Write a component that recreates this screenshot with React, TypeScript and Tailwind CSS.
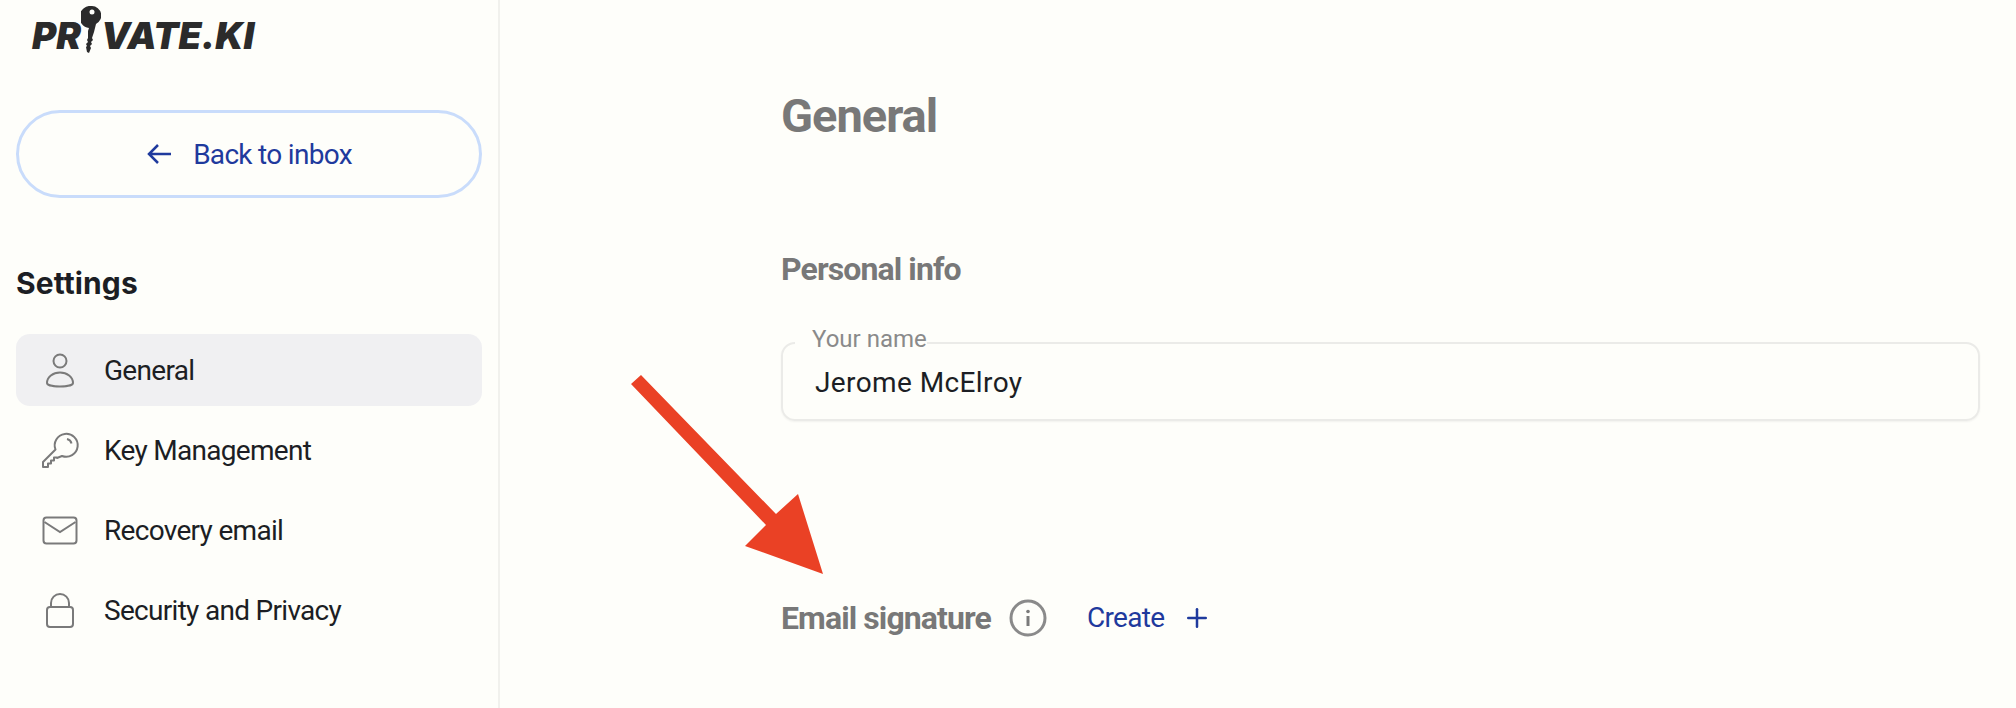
import { Plus } from "lucide-react";
import type { ReactNode } from "react";

function PersonIcon() {
  return (
    <svg width="40" height="40" viewBox="0 0 40 40" fill="none" stroke="#7a7a7a" strokeWidth="2">
      <circle cx="20" cy="11" r="6.5" />
      <path d="M7 33c0-6 6-10.500 13-10.500S33 27 33 33c0 2-6 3.500-13 3.500S7 35 7 33Z" />
    </svg>
  );
}

function KeyIcon() {
  return (
    <svg width="40" height="40" viewBox="0 0 40 40" fill="none" stroke="#7a7a7a" strokeWidth="2" strokeLinejoin="round">
      <path d="M3 37v-5l12.500-12.500A11.500 11.500 0 1 1 22 26l-5 2v-0.500h-3v3h-3v3H8v3.500Z" />
      <path d="M27 9a6 6 0 0 1 4.500 4.500" />
    </svg>
  );
}

function MailIcon() {
  return (
    <svg width="40" height="40" viewBox="0 0 40 40" fill="none" stroke="#7a7a7a" strokeWidth="2">
      <rect x="3.500" y="7.500" width="33" height="26" rx="3" />
      <path d="M4.500 12 20 22l15.500-10" />
    </svg>
  );
}

function LockIcon() {
  return (
    <svg width="40" height="40" viewBox="0 0 40 40" fill="none" stroke="#7a7a7a" strokeWidth="2">
      <rect x="7" y="17" width="26" height="20" rx="3" />
      <path d="M11 17v-4a9 9 0 0 1 18 0v4" />
    </svg>
  );
}

function LogoKey() {
  return (
    <svg width="20" height="50" viewBox="0 0 20 50" className="shrink-0">
      <path
        fill="#2b2b2b"
        d="M11 0a9.500 9.500 0 0 1 4 18l-2 8-1 3-1 3 1 2-2 2 1 2-2 2 1 2-2 5-2-1-1-5 1-1-1-2 2-2-1-2 1-2v-7l1-3A9.500 9.500 0 0 1 11 0Z"
      />
      <circle cx="11" cy="6" r="2.500" fill="#fefefa" />
    </svg>
  );
}

function NavItem({ icon, label, active }: { icon: ReactNode; label: string; active?: boolean }) {
  return (
    <div
      className={`flex h-[72px] items-center gap-[24px] rounded-[14px] pl-[24px] mb-[8px] ${
        active ? "bg-[#f0f0f2]" : ""
      }`}
    >
      {icon}
      <span className="pt-[2px] text-[28px] tracking-[-0.7px] text-[#1c1e24]">{label}</span>
    </div>
  );
}

export default function App() {
  return (
    <div className="relative flex h-[708px] w-[2016px] overflow-hidden bg-[#fefefa] font-['Roboto',sans-serif]">
      {/* Sidebar */}
      <aside className="h-full w-[500px] shrink-0 border-r-2 border-[#f1f1ed] px-4">
        <div className="flex h-[58px] items-end pb-[9px] pl-[16px]">
          <div className="flex items-end font-['Inter',sans-serif] text-[37px] leading-[26px] font-black italic text-[#2b2b2b]">
            <span>PR</span>
            <span className="-mb-[7px]">
              <LogoKey />
            </span>
            <span>VATE.KI</span>
          </div>
        </div>

        <button className="mt-[52px] flex h-[88px] w-full items-center justify-center gap-[21px] rounded-full border-[3px] border-[#c9dcfb] text-[#1f3a9d]">
          <svg width="26" height="24" viewBox="0 0 26 24" fill="none" stroke="currentColor" strokeWidth="2.500">
            <path d="M25 12H3M12 3l-9 9 9 9" />
          </svg>
          <span className="pt-[2px] text-[28px] tracking-[-0.7px]">Back to inbox</span>
        </button>

        <h2 className="mt-[66px] font-['Inter',sans-serif] text-[30px] leading-[38px] tracking-[0.1px] font-bold text-[#1c1e24]">
          Settings
        </h2>

        <nav className="mt-[32px]">
          <NavItem icon={<PersonIcon />} label="General" active />
          <NavItem icon={<KeyIcon />} label="Key Management" />
          <NavItem icon={<MailIcon />} label="Recovery email" />
          <NavItem icon={<LockIcon />} label="Security and Privacy" />
        </nav>
      </aside>

      {/* Main */}
      <main className="flex-1 pl-[281px] pr-[36px]">
        <h1 className="mt-[88px] text-[47px] leading-[56px] tracking-[-1px] font-bold text-[#787878]">General</h1>

        <h3 className="mt-[107px] text-[32px] leading-[36px] tracking-[-0.9px] font-bold text-[#787878]">Personal info</h3>

        <div className="relative mt-[55px] flex h-[79px] items-center rounded-[14px] border-2 border-[#ebebe8] pl-[32px] shadow-[0_1px_2px_rgba(0,0,0,0.05)]">
          <span className="absolute -top-[20px] left-[12px] bg-[#fefefa] pl-[17px] text-[24px] leading-[30px] text-[#8a8a8a]">
            Your name
          </span>
          <span className="pt-[3px] text-[28px] tracking-[0.4px] text-[#1c1e24]">Jerome McElroy</span>
        </div>

        <div className="mt-[175px] flex items-center">
          <span className="text-[32px] leading-[44px] tracking-[-0.9px] font-bold text-[#787878]">Email signature</span>
          <svg width="38" height="38" viewBox="0 0 38 38" fill="none" className="ml-[18px]">
            <circle cx="19" cy="19" r="17" stroke="#8a8a8a" strokeWidth="3" />
            <circle cx="19" cy="12.500" r="1.800" fill="#7a7a7a" />
            <path d="M19 17v10" stroke="#7a7a7a" strokeWidth="3" />
          </svg>
          <span className="ml-[40px] text-[28px] tracking-[-0.7px] text-[#1f3a9d]">Create</span>
          <Plus size={30} strokeWidth={2} className="ml-[18px] text-[#1f3a9d]" />
        </div>
      </main>

      {/* Annotation arrow over the page */}
      <svg width="2016" height="708" viewBox="0 0 2016 708" className="pointer-events-none absolute inset-0">
        <polygon fill="#ea4125" points="641,375 631,384 766,525 745,546 823,574 798,494 776,514" />
      </svg>
    </div>
  );
}
